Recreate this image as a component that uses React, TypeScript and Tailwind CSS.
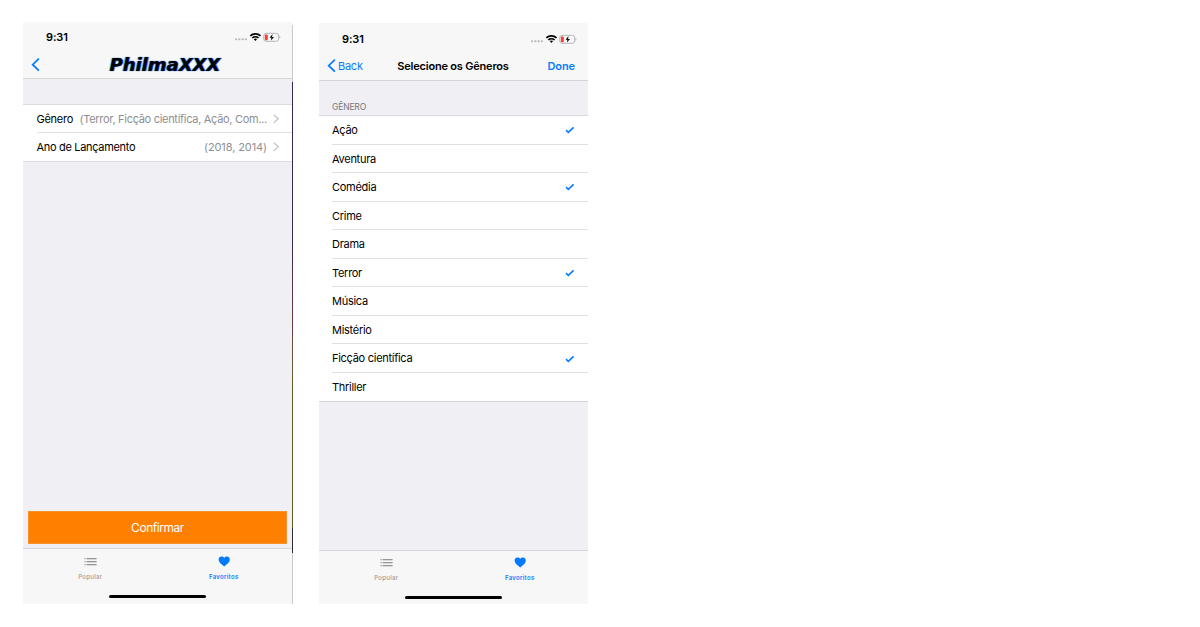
import React from 'react';

function StatusBar() {
  return (
    <div className="flex h-[30px] shrink-0 items-center pl-[23px] pr-[11px]">
      <span className="text-[11px] font-semibold leading-none tracking-[-0.1px] text-black">9:31</span>
      <svg className="ml-auto block" width="47" height="10" viewBox="0 0 47 10">
        <g fill="#b9b9bb">
          <rect x="1" y="6.3" width="2.2" height="2" rx="0.8" />
          <rect x="4.3" y="6.3" width="2.2" height="2" rx="0.8" />
          <rect x="7.5" y="6.3" width="2.2" height="2" rx="0.8" />
          <rect x="10.7" y="6.3" width="2.2" height="2" rx="0.8" />
        </g>
        <g fill="none" stroke="#000" strokeWidth="1.7">
          <path d="M16.3 3.9C19.1 1.2 23.7 1.2 26.5 3.9" />
          <path d="M18.3 6C20 4.4 22.8 4.4 24.5 6" />
        </g>
        <path d="M19.7 7.1C20.7 6.3 22.1 6.3 23.1 7.1L21.4 8.9Z" fill="#000" />
        <rect x="29.8" y="1.3" width="14.8" height="8" rx="2.2" fill="none" stroke="#b0b0b2" strokeWidth="0.9" />
        <path d="M45.5 3.8Q47.1 5.2 45.5 6.6Z" fill="#a0a0a2" />
        <rect x="30.9" y="2.4" width="2.9" height="5.8" rx="0.9" fill="#ff3b30" />
        <path d="M38.6 1.9L35.6 5.7H37.4L36.9 8.6L40 4.9H38Z" fill="#000" />
      </svg>
    </div>
  );
}

function BackArrow() {
  return (
    <svg className="block" width="9" height="14" viewBox="0 0 9 14">
      <path d="M7.9 0.7L1.7 6.7L7.9 12.7" fill="none" stroke="#0a7cff" strokeWidth="1.8" />
    </svg>
  );
}

function Chevron() {
  return (
    <svg className="ml-[6px] block shrink-0" width="6" height="10" viewBox="0 0 6 10">
      <path d="M0.9 0.7L5.2 4.7L0.9 8.7" fill="none" stroke="#c4c4c8" strokeWidth="1.2" />
    </svg>
  );
}

function Check() {
  return (
    <svg className="block" width="10" height="8" viewBox="0 0 10 8">
      <path d="M1 4.2L3.3 6.4L8.6 1.3" fill="none" stroke="#0a7cff" strokeWidth="1.6" />
    </svg>
  );
}

function TabBar({ compact = false }: { compact?: boolean }) {
  return (
    <div className={`flex shrink-0 flex-col border-t border-[#d6d6da] bg-[#f7f7f7] ${compact ? 'h-[54px]' : 'h-[56px]'}`}>
      <div className={`grid grid-cols-2 ${compact ? '-mt-px h-[32px]' : 'h-[32px]'}`}>
        <div className="flex flex-col items-center pt-[8px] text-[#9b9b9b]">
          <svg className="block" width="13" height="9" viewBox="0 0 13 9">
            <g fill="#969696">
              <rect x="0.5" y="1" width="1.2" height="1.2" />
              <rect x="0.5" y="4" width="1.2" height="1.2" />
              <rect x="0.5" y="7" width="1.2" height="1.2" />
              <rect x="2.6" y="1" width="10" height="1.3" />
              <rect x="2.6" y="4" width="10" height="1.3" />
              <rect x="2.6" y="7" width="10" height="1.3" />
            </g>
          </svg>
          <span className="mt-[7px] text-[6px] font-medium leading-[8px] tracking-[0.3px]">Popular</span>
        </div>
        <div className="flex flex-col items-center pr-[2px] pt-[7px] text-[#0a7cff]">
          <svg className="block" width="12" height="11" viewBox="0 0 12 11">
            <path d="M6.2 10.6C3.4 8.3 0.6 6.3 0.6 3.6C0.6 1.8 1.9 0.5 3.5 0.5C4.6 0.5 5.6 1 6.2 1.9C6.8 1 7.8 0.5 8.9 0.5C10.5 0.5 11.8 1.8 11.8 3.6C11.8 6.3 9 8.3 6.2 10.6Z" fill="#007aff" />
          </svg>
          <span className="mt-[6px] text-[6px] font-semibold leading-[8px] tracking-[0.3px]">Favoritos</span>
        </div>
      </div>
      <div className="mx-auto mt-[13.5px] h-[3.5px] w-[97px] rounded-full bg-black" />
    </div>
  );
}

function FilterScreen() {
  return (
    <div className="flex">
      <div className="flex h-[582px] w-[269px] flex-col bg-[#efeff4]">
        <div className="h-[57px] shrink-0 border-b border-[#d5d5d8] bg-[#f7f7f7]">
          <StatusBar />
          <div className="grid h-[26px] grid-cols-[78.5px_1fr] items-center pl-[8px]">
            <BackArrow />
            <span className="whitespace-nowrap font-['DejaVu_Sans'] text-[18px] font-bold italic leading-none tracking-[-0.02px] text-black [text-shadow:0.8px_0_0.8px_#1740d8,-0.8px_0_0.7px_#43b6e8,0_0.4px_0.7px_#2b62df]">
              PhilmaXXX
            </span>
          </div>
        </div>
        <div className="mt-[25px] border-y border-[#dcdce0] bg-white pl-[13.5px] text-[11px]">
          <div className="flex h-[28px] items-center border-b border-[#e1e1e4] pr-[13px] pt-[0.9px]">
            <span className="tracking-[-0.25px] text-black">Gênero</span>
            <span className="ml-auto whitespace-nowrap tracking-[-0.3px] text-[#8e8e93]">(Terror, Ficção científica, Ação, Com...</span>
            <Chevron />
          </div>
          <div className="flex h-[28px] items-center pr-[13px]">
            <span className="tracking-[-0.32px] text-black">Ano de Lançamento</span>
            <span className="ml-auto tracking-[-0.1px] text-[#8e8e93]">(2018, 2014)</span>
            <Chevron />
          </div>
        </div>
        <button className="mx-[5px] mb-[4px] mt-auto h-[33px] shrink-0 border border-[#f5922c] bg-[#ff8000] text-[12px] tracking-[-0.45px] text-white">
          Confirmar
        </button>
        <TabBar />
      </div>
      <div className="flex w-px flex-col pt-[3px]">
        <div className="h-[57px] bg-[#c9c9cb]" />
        <div className="h-[170px] bg-[#38264e]" />
        <div className="h-[130px] bg-linear-to-b from-[#43294a] via-[#6b3a48] to-[#66602a]" />
        <div className="h-[146px] bg-[#5f5c2b]" />
        <div className="h-[25px] bg-[#292b3a]" />
        <div className="flex-1 bg-[#c9c9cb]" />
      </div>
    </div>
  );
}

const genres = [
  { name: 'Ação', selected: true },
  { name: 'Aventura', selected: false },
  { name: 'Comédia', selected: true },
  { name: 'Crime', selected: false },
  { name: 'Drama', selected: false },
  { name: 'Terror', selected: true },
  { name: 'Música', selected: false },
  { name: 'Mistério', selected: false },
  { name: 'Ficção científica', selected: true },
  { name: 'Thriller', selected: false },
];

function GenreScreen() {
  return (
    <div className="mt-px flex h-[581px] w-[269px] flex-col bg-[#efeff4]">
      <div className="flex h-[58px] shrink-0 flex-col border-b border-[#d5d5d8] bg-[#f7f7f7] pt-px">
        <StatusBar />
        <div className="-mt-px grid h-[26px] grid-cols-[1fr_auto_1fr] items-center pl-[8px] pr-[13px] text-[11px]">
          <div className="flex items-center gap-[2px] text-[#0a7cff]">
            <BackArrow />
            <span className="tracking-[-0.25px]">Back</span>
          </div>
          <span className="pl-[4px] font-semibold tracking-[-0.2px] text-black">Selecione os Gêneros</span>
          <span className="text-right font-semibold tracking-[-0.1px] text-[#0a7cff]">Done</span>
        </div>
      </div>
      <div className="flex h-[35px] shrink-0 items-end border-b border-[#d9d9dd] pb-[2px] pl-[13px] text-[8.5px] leading-[12px] tracking-[-0.15px] text-[#75757a]">
        GÊNERO
      </div>
      <div className="border-b border-[#d5d5d9] bg-white pl-[13px] text-[11px] text-black">
        {genres.map((g) => (
          <div key={g.name} className="flex h-[28.55px] items-center justify-between border-b border-[#e1e1e4] pr-[13px] pt-[1.1px] last:border-b-0 last:pt-0">
            <span className="tracking-[-0.28px]">{g.name}</span>
            {g.selected && <Check />}
          </div>
        ))}
      </div>
      <div className="mt-auto">
        <TabBar compact />
      </div>
    </div>
  );
}

export default function App() {
  return (
    <div className="flex h-[627px] w-[1200px] items-start gap-[26px] overflow-hidden bg-white pl-[23px] pt-[22px] font-['Inter',sans-serif]">
      <FilterScreen />
      <GenreScreen />
    </div>
  );
}
